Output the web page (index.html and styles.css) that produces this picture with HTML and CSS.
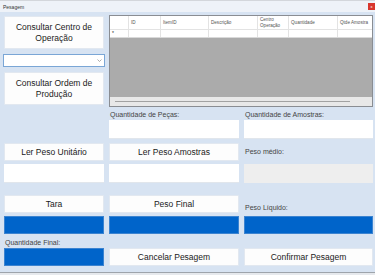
FILE: index.html
```html
<!DOCTYPE html>
<html>
<head>
    <link rel="stylesheet" href="styles.css">
</head>
<body>
    <div class="window">
        <div class="titlebar">
            <span class="title">Pesagem</span>
            <span class="close">x</span>
        </div>

        <div class="top">
            <div class="left-col">
                <button class="btn big">Consultar Centro de<br>Operação</button>
                <div class="combo">
                    <svg width="5" height="3" viewBox="0 0 5 3"><path d="M0.5 0.5 L2.5 2.5 L4.5 0.5" fill="none" stroke="#8a8a8a" stroke-width="0.7"/></svg>
                </div>
                <button class="btn big">Consultar Ordem de<br>Produção</button>
            </div>

            <div class="grid-view">
                <div class="grid-row grid-head">
                    <div class="cell c0"></div>
                    <div class="cell c1">ID</div>
                    <div class="cell c2">ItemID</div>
                    <div class="cell c3">Descrição</div>
                    <div class="cell c4">Centro<br>Operação</div>
                    <div class="cell c5">Quantidade</div>
                    <div class="cell c6">Qtde Amostra</div>
                </div>
                <div class="grid-row grid-new">
                    <div class="cell c0">*</div>
                    <div class="cell c1"></div>
                    <div class="cell c2"></div>
                    <div class="cell c3"></div>
                    <div class="cell c4"></div>
                    <div class="cell c5"></div>
                    <div class="cell c6"></div>
                </div>
                <div class="grid-empty"></div>
                <div class="hscroll"><div class="thumb"></div></div>
            </div>
        </div>

        <div class="fields">
            <label class="lbl r1 col2">Quantidade de Peças:</label>
            <label class="lbl r1 col3">Quantidade de Amostras:</label>
            <div class="input r2 col2"></div>
            <div class="input r2 col3"></div>

            <button class="btn small r3 col1">Ler Peso Unitário</button>
            <button class="btn small r3 col2">Ler Peso Amostras</button>
            <label class="lbl r3 col3 mid">Peso médio:</label>

            <div class="input r4 col1"></div>
            <div class="input r4 col2"></div>
            <div class="input r4 col3 disabled"></div>

            <button class="btn small r5 col1">Tara</button>
            <button class="btn small r5 col2">Peso Final</button>
            <label class="lbl r5 col3">Peso Líquido:</label>

            <div class="blue r6 col1"></div>
            <div class="blue r6 col2"></div>
            <div class="blue r6 col3"></div>

            <label class="lbl r7 col1">Quantidade Final:</label>

            <div class="blue r8 col1"></div>
            <button class="btn small r8 col2">Cancelar Pesagem</button>
            <button class="btn small r8 col3">Confirmar Pesagem</button>
        </div>

        <div class="statusbar"></div>
    </div>
</body>
</html>
```

FILE: styles.css
```css
body {
    margin: 0;
    font-family: "Liberation Sans", Arial, sans-serif;
    background-color: #d7e3f2;
}

.window {
    width: 375px;
    height: 275px;
    overflow: hidden;
    background-color: #d7e3f2;
}

.titlebar {
    height: 11px;
    background-color: #eef2f8;
    border-top: 1px solid #d3d6db;
    display: flex;
    align-items: center;
    justify-content: space-between;
}

.title {
    font-size: 5px;
    color: #333;
    padding-left: 3px;
}

.close {
    width: 7px;
    height: 7px;
    margin-top: -1px;
    background-color: #d8362d;
    color: #fff;
    font-size: 4px;
    line-height: 7px;
    text-align: center;
}

.top {
    height: 98px;
    display: flex;
    gap: 5px;
    padding-left: 4px;
}

.left-col {
    width: 100px;
    display: flex;
    flex-direction: column;
    gap: 5px;
    padding-top: 4px;
}

.btn {
    margin: 0;
    padding: 0;
    font-family: "Liberation Sans", Arial, sans-serif;
    font-size: 8.5px;
    color: #1a1a1a;
    background-color: #fdfdfd;
    border: 1px solid #e2e8f0;
    border-radius: 1px;
}

.big {
    height: 33px;
    line-height: 10.5px;
}

.small {
    height: 18px;
}

.combo {
    height: 13px;
    margin: 0 -1px;
    box-sizing: border-box;
    background-color: #fff;
    border: 1px solid #7aa6d6;
    display: flex;
    align-items: center;
    justify-content: flex-end;
    padding-right: 2px;
}

.grid-view {
    width: 264px;
    height: 92px;
    margin-top: 3px;
    box-sizing: border-box;
    border: 1px solid #8a8d92;
    background-color: #ababab;
    display: flex;
    flex-direction: column;
}

.grid-row {
    display: flex;
    background-color: #fff;
    border-bottom: 1px solid #e3e3e3;
}

.grid-head {
    height: 13px;
}

.grid-new {
    height: 7px;
    border-bottom-color: #d9d9d9;
}

.cell {
    box-sizing: border-box;
    border-right: 1px solid #e3e3e3;
    font-size: 4.6px;
    line-height: 5.5px;
    color: #555;
    padding-left: 2px;
    display: flex;
    align-items: center;
}

.c0 { width: 19px; font-size: 5px; color: #222; }
.c1 { width: 32px; }
.c2 { width: 48px; }
.c3 { width: 49px; }
.c4 { width: 31px; }
.c5 { width: 49px; }
.c6 { width: 34px; border-right: none; }

.grid-empty {
    flex: 1;
}

.hscroll {
    height: 9px;
    background-color: #e8e8e8;
    display: flex;
    align-items: center;
    padding: 0 5px;
}

.thumb {
    width: 235px;
    height: 1px;
    background-color: #a2a2a2;
}

.fields {
    display: grid;
    grid-template-columns: 100px 130px 129px;
    grid-template-rows: 10px 19px 22px 22px 30px 21px 14px 18px;
    column-gap: 5px;
    padding-left: 4px;
}

.col1 { grid-column: 1; }
.col2 { grid-column: 2; }
.col3 { grid-column: 3; }
.r1 { grid-row: 1; }
.r2 { grid-row: 2; }
.r3 { grid-row: 3; }
.r4 { grid-row: 4; }
.r5 { grid-row: 5; }
.r6 { grid-row: 6; }
.r7 { grid-row: 7; }
.r8 { grid-row: 8; }

.fields > * {
    align-self: end;
}

.lbl {
    font-size: 7px;
    line-height: 10px;
    color: #444;
    padding-left: 1px;
}

.lbl.mid {
    align-self: center;
    margin-top: 4px;
}

.input {
    height: 19px;
    background-color: #fff;
    border-bottom: 1px solid #e1e6ec;
    box-sizing: border-box;
}

.disabled {
    background-color: #eeeeee;
    border-bottom: none;
}

.blue {
    height: 18px;
    background-color: #0064ca;
    border: 1px solid #3b83d0;
    box-sizing: border-box;
}

.statusbar {
    margin-top: 6px;
    height: 3px;
    border-top: 1px solid #9ea4ab;
    background-color: #e6e9ed;
}
```
